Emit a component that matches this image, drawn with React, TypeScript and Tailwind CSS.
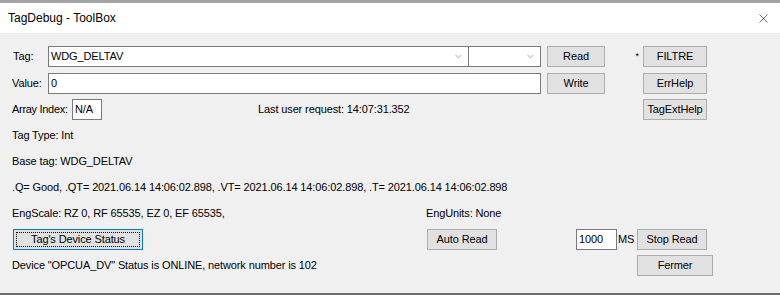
import { ChevronDown, X } from "lucide-react";

const font = { fontFamily: '"Liberation Sans", Arial, sans-serif' };

const Btn = ({ label, className = "" }: { label: string; className?: string }) => (
  <div
    className={`flex h-[21px] items-center justify-center border border-[#adadad] bg-[#e1e1e1] text-[11px] tracking-[-0.12px] text-black ${className}`}
  >
    {label}
  </div>
);

const Field = ({ value, className = "" }: { value: string; className?: string }) => (
  <div
    className={`flex h-[21px] items-center border border-[#7a7a7a] bg-white px-[2px] text-[11px] tracking-[-0.12px] ${className}`}
  >
    {value}
  </div>
);

const Combo = ({ value, className = "" }: { value: string; className?: string }) => (
  <div
    className={`flex h-[21px] items-center justify-between border border-[#7a7a7a] bg-white pl-[2px] pr-[4px] text-[11px] tracking-[-0.12px] ${className}`}
  >
    <span>{value}</span>
    <ChevronDown size={11} strokeWidth={1} className="text-[#444]" />
  </div>
);

const Line = ({ children }: { children: React.ReactNode }) => (
  <div className="flex h-[26px] items-center text-[11px] tracking-[-0.12px]">{children}</div>
);

export default function App() {
  return (
    <div className="flex h-[295px] w-[780px] flex-col overflow-hidden bg-[#f0f0f0] text-black" style={font}>
      <div className="h-[3px] bg-[#a3a3a3]" />
      <div className="flex h-[30px] items-center justify-between bg-white pl-[8px] pr-[8px]">
        <span className="text-[12px]">TagDebug - ToolBox</span>
        <X size={15} strokeWidth={0.9} className="mr-[1px]" />
      </div>

      <div className="flex flex-1 flex-col pl-[12px]">
        {/* Tag row */}
        <div className="mt-[13px] flex items-center">
          <span className="w-[36px] pl-[1px] text-[11px] tracking-[-0.12px]">Tag:</span>
          <Combo value="WDG_DELTAV" className="w-[421px]" />
          <Combo value="" className="-ml-px w-[73px]" />
          <Btn label="Read" className="ml-[6px] w-[58px]" />
          <span className="w-[38px] pr-[4px] text-right text-[9px]">*</span>
          <Btn label="FILTRE" className="w-[64px]" />
        </div>

        {/* Value row */}
        <div className="mt-[6px] flex items-center">
          <span className="w-[36px] text-[11px] tracking-[-0.12px]">Value:</span>
          <Field value="0" className="w-[493px]" />
          <Btn label="Write" className="ml-[6px] w-[58px]" />
          <div className="w-[38px]" />
          <Btn label="ErrHelp" className="w-[64px]" />
        </div>

        {/* Array index row */}
        <div className="mt-[5px] flex items-center">
          <span className="w-[60px] text-[11px] tracking-[-0.3px]">Array Index:</span>
          <Field value="N/A" className="w-[30px]" />
          <span className="ml-[156px] w-[385px] text-[11px] tracking-[-0.12px]">Last user request: 14:07:31.352</span>
          <Btn label="TagExtHelp" className="w-[64px]" />
        </div>

        <div className="mt-[2px]">
          <Line>Tag Type: Int</Line>
          <Line>Base tag: WDG_DELTAV</Line>
          <Line>
            .Q= Good, .QT= 2021.06.14 14:06:02.898, .VT= 2021.06.14 14:06:02.898, .T= 2021.06.14 14:06:02.898
          </Line>
          <Line>
            <span className="w-[414px]">EngScale: RZ 0, RF 65535, EZ 0, EF 65535,</span>
            <span>EngUnits: None</span>
          </Line>
        </div>

        {/* Buttons row */}
        <div className="mt-[3px] flex items-center">
          <div className="ml-[1px] flex h-[21px] w-[130px] items-center justify-center border border-[#0078d7] bg-[#e1e1e1] p-[2px]">
            <div className="flex h-full w-full items-center justify-center border border-dotted border-black text-[11px] tracking-[-0.12px]">
              Tag's Device Status
            </div>
          </div>
          <Btn label="Auto Read" className="ml-[284px] w-[70px]" />
          <Field value="1000" className="ml-[79px] w-[41px]" />
          <span className="ml-[1px] w-[19px] text-[11px] tracking-[-0.12px]">MS</span>
          <Btn label="Stop Read" className="w-[70px]" />
        </div>

        {/* Status row */}
        <div className="mt-[5px] flex items-center">
          <span className="w-[625px] text-[11px] tracking-[-0.12px]">
            Device "OPCUA_DV" Status is ONLINE, network number is 102
          </span>
          <Btn label="Fermer" className="w-[76px]" />
        </div>
      </div>

      <div className="h-[2px] bg-[#6a6a6a]" />
    </div>
  );
}
